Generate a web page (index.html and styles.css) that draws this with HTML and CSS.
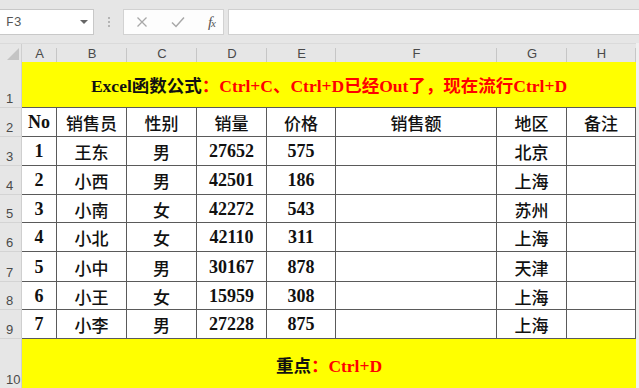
FILE: index.html
```html
<!DOCTYPE html>
<html lang="zh">
<head>
<meta charset="utf-8">
<title>Excel</title>
<link rel="stylesheet" href="styles.css">
</head>
<body>
<div class="fbar">
  <div class="namebox"><span class="nb-text">F3</span><svg class="nb-arrow" width="8" height="5" viewBox="0 0 8 5"><path d="M0 0H8L4 4Z" fill="#666"/></svg></div>
  <div class="grip"><i></i><i></i><i></i></div>
  <div class="btns">
    <svg class="ico" width="12" height="12" viewBox="0 0 12 12"><path d="M1.5 1.5L10.5 10.5M10.5 1.5L1.5 10.5" stroke="#a8a8a8" stroke-width="1.3" fill="none"/></svg>
    <svg class="ico" width="14" height="12" viewBox="0 0 14 12"><path d="M1 6.5L5 10.5L13 1.5" stroke="#a8a8a8" stroke-width="1.5" fill="none"/></svg>
    <span class="fx">f<span class="fx-x">x</span></span>
  </div>
  <div class="finput"></div>
</div>
<div class="sheet">
  <div class="colhead">
    <div class="corner"><svg width="12" height="12" viewBox="0 0 12 12"><path d="M12 0V12H0Z" fill="#c4c4c4"/></svg></div>
    <div class="ch">A</div><div class="ch">B</div><div class="ch">C</div><div class="ch">D</div>
    <div class="ch">E</div><div class="ch">F</div><div class="ch">G</div><div class="ch">H</div>
  </div>
  <div class="grid">
    <div class="rh">1</div>
    <div class="ycell title"><span class="blk">Excel函数公式</span><span class="red">：Ctrl+C、Ctrl+D已经Out了，现在流行Ctrl+D</span></div>

    <div class="rh">2</div>
    <div class="c b">No</div><div class="c">销售员</div><div class="c">性别</div><div class="c">销量</div><div class="c">价格</div><div class="c">销售额</div><div class="c">地区</div><div class="c">备注</div>

    <div class="rh">3</div>
    <div class="c b">1</div><div class="c">王东</div><div class="c">男</div><div class="c b">27652</div><div class="c b">575</div><div class="c"></div><div class="c">北京</div><div class="c"></div>

    <div class="rh">4</div>
    <div class="c b">2</div><div class="c">小西</div><div class="c">男</div><div class="c b">42501</div><div class="c b">186</div><div class="c"></div><div class="c">上海</div><div class="c"></div>

    <div class="rh">5</div>
    <div class="c b">3</div><div class="c">小南</div><div class="c">女</div><div class="c b">42272</div><div class="c b">543</div><div class="c"></div><div class="c">苏州</div><div class="c"></div>

    <div class="rh">6</div>
    <div class="c b">4</div><div class="c">小北</div><div class="c">女</div><div class="c b">42110</div><div class="c b">311</div><div class="c"></div><div class="c">上海</div><div class="c"></div>

    <div class="rh">7</div>
    <div class="c b">5</div><div class="c">小中</div><div class="c">男</div><div class="c b">30167</div><div class="c b">878</div><div class="c"></div><div class="c">天津</div><div class="c"></div>

    <div class="rh">8</div>
    <div class="c b">6</div><div class="c">小王</div><div class="c">女</div><div class="c b">15959</div><div class="c b">308</div><div class="c"></div><div class="c">上海</div><div class="c"></div>

    <div class="rh">9</div>
    <div class="c b">7</div><div class="c">小李</div><div class="c">男</div><div class="c b">27228</div><div class="c b">875</div><div class="c"></div><div class="c">上海</div><div class="c"></div>

    <div class="rh">10</div>
    <div class="ycell foot"><span class="blk">重点</span><span class="red">：Ctrl+D</span></div>
  </div>
</div>
</body>
</html>
```
FILE: styles.css
```css
* { box-sizing: border-box; }
html, body { margin: 0; padding: 0; }
body {
  width: 639px;
  height: 388px;
  overflow: hidden;
  background: #e6e6e6;
  font-family: "Liberation Serif", "Noto Sans CJK SC", serif;
}

/* formula bar */
.fbar {
  height: 43px;
  display: flex;
  align-items: flex-start;
  padding-top: 9px;
}
.namebox {
  width: 94px;
  height: 26px;
  background: #fff;
  border: 1px solid #c8c8c8;
  border-left: none;
  display: flex;
  align-items: center;
  justify-content: space-between;
  padding: 0 5px 0 6px;
}
.nb-text {
  font-family: "Liberation Mono", "DejaVu Sans Mono", monospace;
  font-size: 13px;
  color: #555;
}
.grip {
  width: 29px;
  height: 26px;
  display: flex;
  flex-direction: column;
  align-items: center;
  justify-content: center;
  gap: 2px;
}
.grip i {
  display: block;
  width: 2px;
  height: 2px;
  background: #b4b4b4;
}
.btns {
  width: 101px;
  height: 26px;
  background: #fdfdfd;
  border: 1px solid #d2d2d2;
  display: flex;
  align-items: center;
  justify-content: space-between;
  padding: 0 8px 0 12px;
}
.fx {
  font-family: "Liberation Serif", serif;
  font-style: italic;
  font-size: 15px;
  color: #555;
  letter-spacing: -1px;
}
.fx-x { font-size: 11px; }
.finput {
  flex: 1;
  height: 26px;
  margin-left: 4px;
  background: #fff;
  border: 1px solid #d0d0d0;
  border-right: none;
}

/* sheet */
.sheet { background: #f0f0f0; }
.colhead, .grid {
  display: grid;
  grid-template-columns: 22px 35px 70px 70px 70px 69px 161px 70px 69px;
  width: 636px;
}
.colhead {
  height: 19px;
  background: #e6e6e6;
  border-top: 1px solid #dadada;
}
.corner {
  display: flex;
  align-items: flex-end;
  justify-content: flex-end;
  padding: 0 2px 2px 0;
  border-right: 1px solid #cfcfcf;
}
.ch {
  font-family: "Liberation Sans", Arial, sans-serif;
  font-size: 13px;
  color: #4a4a4a;
  display: flex;
  align-items: center;
  justify-content: center;
  position: relative;
}
.ch::after {
  content: "";
  position: absolute;
  right: 0;
  top: 4px;
  bottom: 0;
  width: 1px;
  background: #c6c6c6;
}

.grid {
  grid-template-rows: 46px 29px 29px 29px 28px 29px 30px 28px 29px 50px;
}
.rh {
  background: #e6e6e6;
  border-right: 1px solid #cfcfcf;
  border-bottom: 1px solid #d4d4d4;
  font-family: "Liberation Sans", Arial, sans-serif;
  font-size: 13px;
  color: #4a4a4a;
  display: flex;
  align-items: flex-end;
  padding: 0 0 1px 6px;
}
.grid .rh:last-of-type { padding-left: 2px; }
.c {
  background: #fff;
  border-right: 1px solid #5a5a5a;
  border-bottom: 1px solid #5a5a5a;
  display: flex;
  align-items: center;
  justify-content: center;
  font-size: 17px;
  font-weight: 500;
  color: #111;
  padding-top: 1px;
}
.c.b { font-weight: bold; font-size: 18px; }
.ycell {
  grid-column: span 8;
  background: #ffff00;
  display: flex;
  align-items: center;
  justify-content: center;
  font-size: 17.5px;
  font-weight: bold;
}
.title { border-bottom: 1px solid #5a5a5a; }
.blk { color: #111; }
.red { color: #ff0000; }
```
